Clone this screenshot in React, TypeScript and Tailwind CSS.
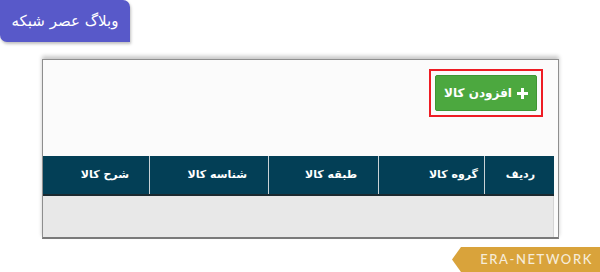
import React from 'react';

const columns = [
  { title: 'ردیف', width: 'w-[70px]', pad: 'pr-[19px]' },
  { title: 'گروه کالا', width: 'w-[106px]', pad: 'pr-[6px]' },
  { title: 'طبقه کالا', width: 'w-[110px]', pad: 'pr-[21px]' },
  { title: 'شناسه کالا', width: 'w-[119px]', pad: 'pr-[21px]' },
  { title: 'شرح کالا', width: 'flex-1', pad: 'pr-[20px]' },
];

const App = () => {
  return (
    <div className="w-[600px] h-[272px] bg-white overflow-hidden flex flex-col font-['DejaVu_Sans',sans-serif]">
      {/* blog badge */}
      <div
        dir="rtl"
        className="w-[130px] h-[43px] bg-[#5859c9] rounded-tr-[7px] rounded-bl-[7px] shadow-[1px_2px_3px_rgba(0,0,0,0.25)] flex items-center justify-center text-white text-[15px] font-normal"
      >
        وبلاگ عصر شبکه
      </div>

      {/* panel */}
      <div className="ml-[42px] mt-[17px] w-[517px] h-[180px] bg-[#fbfbfb] border border-[#8e8e8e] border-b-2 border-b-[#7a7a7a] shadow-[0_-3px_4px_rgba(0,0,0,0.22)] flex flex-col">
        <div dir="rtl" className="flex pt-[9px] pr-[15px]">
          <div className="border-2 border-[#ee1c24] p-[4px]">
            <button className="w-[102px] h-[36px] bg-[#4ca83f] rounded-[2px] border border-[#3f9634] flex items-center justify-center gap-[5px] text-white text-[12px] font-bold">
              <svg width="11" height="11" viewBox="0 0 11 11">
                <path d="M4 0h3v4h4v3H7v4H4V7H0V4h4z" fill="white" />
              </svg>
              افزودن کالا
            </button>
          </div>
        </div>

        <div dir="rtl" className="mt-[39px] mr-[4px] flex flex-col">
          <div className="flex h-[40px] bg-[#033f56] border-b-2 border-[#1b2a30]">
            {columns.map((c, i) => (
              <div
                key={c.title}
                className={`${c.width} ${c.pad} flex items-center text-white text-[11px] font-bold ${i < columns.length - 1 ? 'border-l border-[#c9d2d6]' : ''}`}
              >
                {c.title}
              </div>
            ))}
          </div>
          <div className="h-[41px] bg-[#e8e8e8] border-r border-[#d5d5d5]" />
        </div>
      </div>

      {/* watermark */}
      <div className="flex justify-end mt-[8px]">
        <div className="w-[148px] h-[25px] bg-[#d9a33b] [clip-path:polygon(9px_0,100%_0,100%_100%,9px_100%,0_50%)] flex items-center justify-end pr-[7px] text-[#f6ecd9] text-[13px] tracking-[1.6px] font-['Lato',sans-serif] font-medium">
          ERA-NETWORK
        </div>
      </div>
    </div>
  );
};

export default App;
